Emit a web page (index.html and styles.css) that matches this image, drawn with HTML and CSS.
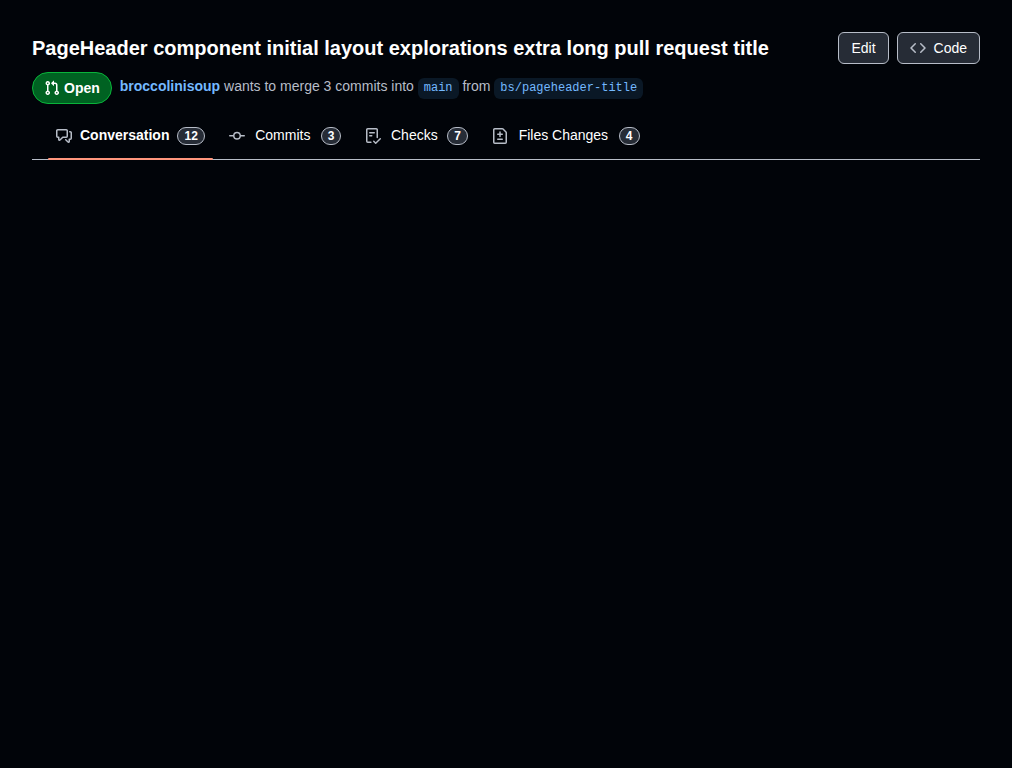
FILE: index.html
```html
<!DOCTYPE html>
<html lang="en">
<head>
<meta charset="utf-8">
<meta name="viewport" content="width=device-width, initial-scale=1">
<title>Pull request</title>
<link rel="stylesheet" href="styles.css">
</head>
<body>
<header class="page-header">
  <div class="title-row">
    <h1 class="title">PageHeader component initial layout explorations extra long pull request title</h1>
    <div class="actions">
      <button class="button" type="button">Edit</button>
      <button class="button" type="button">
        <svg class="icon" viewBox="0 0 16 16" aria-hidden="true"><path d="m11.28 3.22 4.25 4.25a.75.75 0 0 1 0 1.06l-4.25 4.25a.749.749 0 0 1-1.275-.326.749.749 0 0 1 .215-.734L13.94 8l-3.72-3.72a.749.749 0 0 1 .326-1.275.749.749 0 0 1 .734.215Zm-6.56 0a.751.751 0 0 1 1.042.018.751.751 0 0 1 .018 1.042L2.06 8l3.72 3.72a.749.749 0 0 1-.326 1.275.749.749 0 0 1-.734-.215L.47 8.53a.75.75 0 0 1 0-1.06Z"/></svg>
        Code
      </button>
    </div>
  </div>
  <div class="description">
    <span class="state">
      <svg class="state-icon" viewBox="0 0 16 16" aria-hidden="true"><path d="M1.5 3.25a2.25 2.25 0 1 1 3 2.122v5.256a2.251 2.251 0 1 1-1.5 0V5.372A2.25 2.25 0 0 1 1.5 3.25Zm5.677-.177L9.573.677A.25.25 0 0 1 10 .854V2.5h1A2.5 2.5 0 0 1 13.5 5v5.628a2.251 2.251 0 1 1-1.5 0V5a1 1 0 0 0-1-1h-1v1.646a.25.25 0 0 1-.427.177L7.177 3.427a.25.25 0 0 1 0-.354ZM3.75 2.5a.75.75 0 1 0 0 1.5.75.75 0 0 0 0-1.5Zm0 9.5a.75.75 0 1 0 0 1.5.75.75 0 0 0 0-1.5Zm8.25.75a.75.75 0 1 0 1.5 0 .75.75 0 0 0-1.5 0Z"/></svg>
      Open
    </span>
    <p class="summary"><a class="author" href="#author">broccolinisoup</a> wants to merge 3 commits into <a class="branch" href="#main">main</a> from <a class="branch" href="#branch">bs/pageheader-title</a></p>
  </div>
  <nav class="tabs" aria-label="Pull request">
    <a class="tab tab-current" href="#conversation" aria-current="page">
      <svg class="icon" viewBox="0 0 16 16" aria-hidden="true"><path d="M1.75 1h8.5c.966 0 1.75.784 1.75 1.75v5.5A1.75 1.75 0 0 1 10.25 10H7.061l-2.574 2.573A1.458 1.458 0 0 1 2 11.543V10h-.25A1.75 1.75 0 0 1 0 8.25v-5.5C0 1.784.784 1 1.75 1ZM1.5 2.75v5.5c0 .138.112.25.25.25h1a.75.75 0 0 1 .75.75v2.19l2.72-2.72a.749.749 0 0 1 .53-.22h3.5a.25.25 0 0 0 .25-.25v-5.5a.25.25 0 0 0-.25-.25h-8.5a.25.25 0 0 0-.25.25Zm13 2a.25.25 0 0 0-.25-.25h-.5a.75.75 0 0 1 0-1.5h.5c.966 0 1.75.784 1.75 1.75v5.5A1.75 1.75 0 0 1 14.25 12H14v1.543a1.458 1.458 0 0 1-2.487 1.03L9.22 12.28a.749.749 0 0 1 .326-1.275.749.749 0 0 1 .734.215l2.22 2.22v-2.19a.75.75 0 0 1 .75-.75h1a.25.25 0 0 0 .25-.25Z"/></svg>
      <span class="tab-label" data-label="Conversation">Conversation</span>
      <span class="counter">12</span>
    </a>
    <a class="tab" href="#commits">
      <svg class="icon" viewBox="0 0 16 16" aria-hidden="true"><path d="M11.93 8.5a4.002 4.002 0 0 1-7.86 0H.75a.75.75 0 0 1 0-1.5h3.32a4.002 4.002 0 0 1 7.86 0h3.32a.75.75 0 0 1 0 1.5Zm-1.43-.75a2.5 2.5 0 1 0-5 0 2.5 2.5 0 0 0 5 0Z"/></svg>
      <span class="tab-label" data-label="Commits">Commits</span>
      <span class="counter">3</span>
    </a>
    <a class="tab" href="#checks">
      <svg class="icon" viewBox="0 0 16 16" aria-hidden="true"><path d="M2.5 1.75v11.5c0 .138.112.25.25.25h3.17a.75.75 0 0 1 0 1.5H2.75A1.75 1.75 0 0 1 1 13.25V1.75C1 .784 1.784 0 2.75 0h8.5C12.216 0 13 .784 13 1.75v7.736a.75.75 0 0 1-1.5 0V1.75a.25.25 0 0 0-.25-.25h-8.5a.25.25 0 0 0-.25.25Zm13.274 9.537v-.001l-4.557 4.45a.75.75 0 0 1-1.055-.008l-1.943-1.95a.75.75 0 0 1 1.062-1.058l1.419 1.425 4.026-3.932a.75.75 0 1 1 1.048 1.074ZM4.75 4h4.5a.75.75 0 0 1 0 1.5h-4.5a.75.75 0 0 1 0-1.5ZM4 7.75A.75.75 0 0 1 4.75 7h2a.75.75 0 0 1 0 1.5h-2A.75.75 0 0 1 4 7.75Z"/></svg>
      <span class="tab-label" data-label="Checks">Checks</span>
      <span class="counter">7</span>
    </a>
    <a class="tab" href="#files">
      <svg class="icon" viewBox="0 0 16 16" aria-hidden="true"><path d="M1 1.75C1 .784 1.784 0 2.75 0h7.586c.464 0 .909.184 1.237.513l2.914 2.914c.329.328.513.773.513 1.237v9.586A1.75 1.75 0 0 1 13.25 16H2.75A1.75 1.75 0 0 1 1 14.25Zm1.75-.25a.25.25 0 0 0-.25.25v12.5c0 .138.112.25.25.25h10.5a.25.25 0 0 0 .25-.25V4.664a.25.25 0 0 0-.073-.177l-2.914-2.914a.25.25 0 0 0-.177-.073ZM8 3.25a.75.75 0 0 1 .75.75v1.5h1.5a.75.75 0 0 1 0 1.5h-1.5v1.5a.75.75 0 0 1-1.5 0V7h-1.5a.75.75 0 0 1 0-1.5h1.5V4A.75.75 0 0 1 8 3.25Zm-3 8a.75.75 0 0 1 .75-.75h4.5a.75.75 0 0 1 0 1.5h-4.5a.75.75 0 0 1-.75-.75Z"/></svg>
      <span class="tab-label" data-label="Files Changes">Files Changes</span>
      <span class="counter">4</span>
    </a>
  </nav>
</header>
</body>
</html>
```
FILE: styles.css
```css
* {
  box-sizing: border-box;
}

body {
  margin: 0;
  padding: 32px;
  background: #010409;
  color: #ffffff;
  font-family: "Liberation Sans", Arial, sans-serif;
  font-size: 14px;
  line-height: 20px;
}

a {
  color: inherit;
  text-decoration: none;
}

.page-header {
  display: flex;
  flex-direction: column;
}

.title-row {
  display: flex;
  align-items: flex-start;
  justify-content: space-between;
  gap: 8px;
}

.title {
  margin: 0;
  font-size: 20px;
  font-weight: 600;
  line-height: 32px;
}

.actions {
  display: flex;
  flex-shrink: 0;
  gap: 8px;
}

.button {
  display: flex;
  align-items: center;
  gap: 8px;
  height: 32px;
  padding: 0 12px;
  border: 1px solid #b7bdc8;
  border-radius: 6px;
  background: #262c36;
  color: #ffffff;
  font: inherit;
  cursor: pointer;
}

.icon {
  flex-shrink: 0;
  width: 16px;
  height: 16px;
  fill: #b7bdc8;
}

.description {
  display: flex;
  align-items: flex-start;
  gap: 8px;
  margin-top: 8px;
}

.state {
  display: flex;
  align-items: center;
  gap: 4px;
  height: 32px;
  padding: 0 11px;
  border: 1px solid #09b43a;
  border-radius: 16px;
  background: #006222;
  font-weight: 600;
}

.state-icon {
  width: 16px;
  height: 16px;
  fill: #ffffff;
}

.summary {
  margin: 0;
  padding-top: 4px;
  color: #b7bdc8;
}

.author {
  color: #74b9ff;
  font-weight: 600;
}

.branch {
  display: inline-block;
  padding: 0 6px 1px;
  border-radius: 6px;
  background: #0a1826;
  color: #74b9ff;
  font-family: "Liberation Mono", monospace;
  font-size: 12px;
}

.tabs {
  display: flex;
  gap: 8px;
  height: 48px;
  margin-top: 8px;
  padding: 0 16px;
  border-bottom: 1px solid #b7bdc8;
}

.tab {
  position: relative;
  display: flex;
  align-items: center;
  gap: 8px;
  padding: 0 8px;
}

.tab-label {
  display: flex;
  flex-direction: column;
  align-items: center;
  padding-bottom: 2px;
}

/* Reserves the bold width so a tab keeps its size when selected. */
.tab-label::after {
  content: attr(data-label);
  height: 0;
  overflow: hidden;
  visibility: hidden;
  font-weight: 600;
}

.tab-current {
  font-weight: 600;
}

.tab-current::after {
  content: "";
  position: absolute;
  right: 0;
  bottom: -1px;
  left: 0;
  height: 2px;
  border-radius: 6px;
  background: #ff967d;
}

.counter {
  padding: 0 6px;
  border: 1px solid #b7bdc8;
  border-radius: 20px;
  background: #262c36;
  font-size: 12px;
  font-weight: 600;
  line-height: 16px;
}
```
